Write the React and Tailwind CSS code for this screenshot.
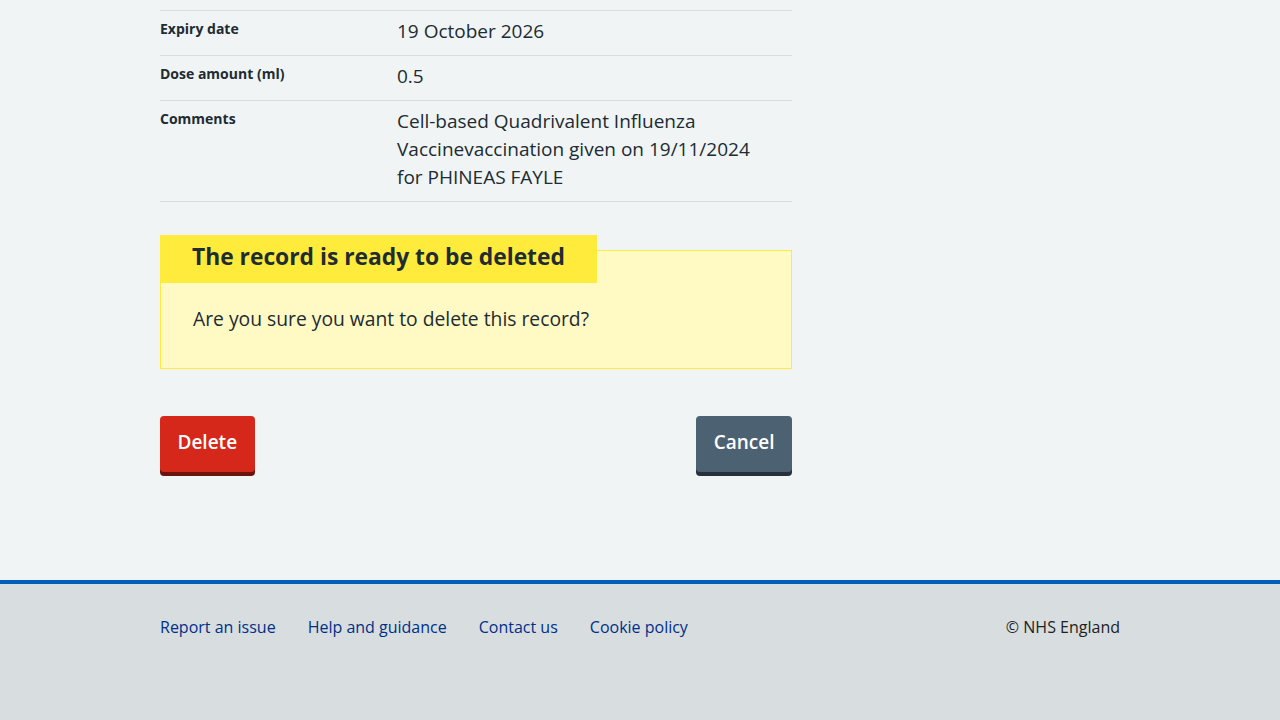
import React from 'react';

const rows = [
  { key: 'Expiry date', value: '19 October 2026' },
  { key: 'Dose amount (ml)', value: '0.5' },
  {
    key: 'Comments',
    value: 'Cell-based Quadrivalent Influenza Vaccinevaccination given on 19/11/2024 for PHINEAS FAYLE',
  },
];

const footerLinks = ['Report an issue', 'Help and guidance', 'Contact us', 'Cookie policy'];

const App = () => {
  return (
    <div
      className="min-h-screen bg-[#f0f4f5] text-[#212b32] flex flex-col"
      style={{ fontFamily: '"Open Sans", "Noto Sans", Arial, sans-serif' }}
    >
      <main className="w-[960px] mx-auto pt-[10px] pb-[108px]">
        <div className="w-[632px]">
          <dl className="border-t border-[#d8dde0]">
            {rows.map((row) => (
              <div key={row.key} className="flex border-b border-[#d8dde0] pt-[6px] pb-[10px]">
                <dt className="w-[237px] text-[14px] font-bold leading-[24px]">{row.key}</dt>
                <dd className="flex-1 pr-6 text-[19px] leading-[28px]">{row.value}</dd>
              </div>
            ))}
          </dl>

          <div className="mt-[48px] border border-[#ffeb3b] bg-[#fff9c4]">
            <h3 className="-mt-[16px] -ml-px w-fit bg-[#ffeb3b] px-8 pt-[6px] pb-[10px] text-[22.8px] font-bold leading-[32px]">
              The record is ready to be deleted
            </h3>
            <p className="px-8 pt-[22px] pb-[35px] text-[19.3px] leading-[28px]">
              Are you sure you want to delete this record?
            </p>
          </div>

          <div className="mt-[47px] flex justify-between">
            <button className="rounded-[4px] border border-transparent bg-[#d5281b] px-[16.5px] pt-[11px] pb-[15px] text-[19px] font-semibold leading-[28px] text-white shadow-[0_4px_0_#6b140e]">
              Delete
            </button>
            <button className="rounded-[4px] border border-transparent bg-[#4c6272] px-[16.5px] pt-[11px] pb-[15px] text-[19px] font-semibold leading-[28px] text-white shadow-[0_4px_0_#263139]">
              Cancel
            </button>
          </div>
        </div>
      </main>

      <footer className="flex-1 border-t-4 border-[#005eb8] bg-[#d8dde0] pb-20">
        <div className="w-[960px] mx-auto pt-[31px] flex justify-between text-[16px] leading-[24px]">
          <ul className="flex gap-8">
            {footerLinks.map((link) => (
              <li key={link}>
                <a href="#" className="text-[#003087]">
                  {link}
                </a>
              </li>
            ))}
          </ul>
          <p className="text-[#231f20]">© NHS England</p>
        </div>
      </footer>
    </div>
  );
};

export default App;
